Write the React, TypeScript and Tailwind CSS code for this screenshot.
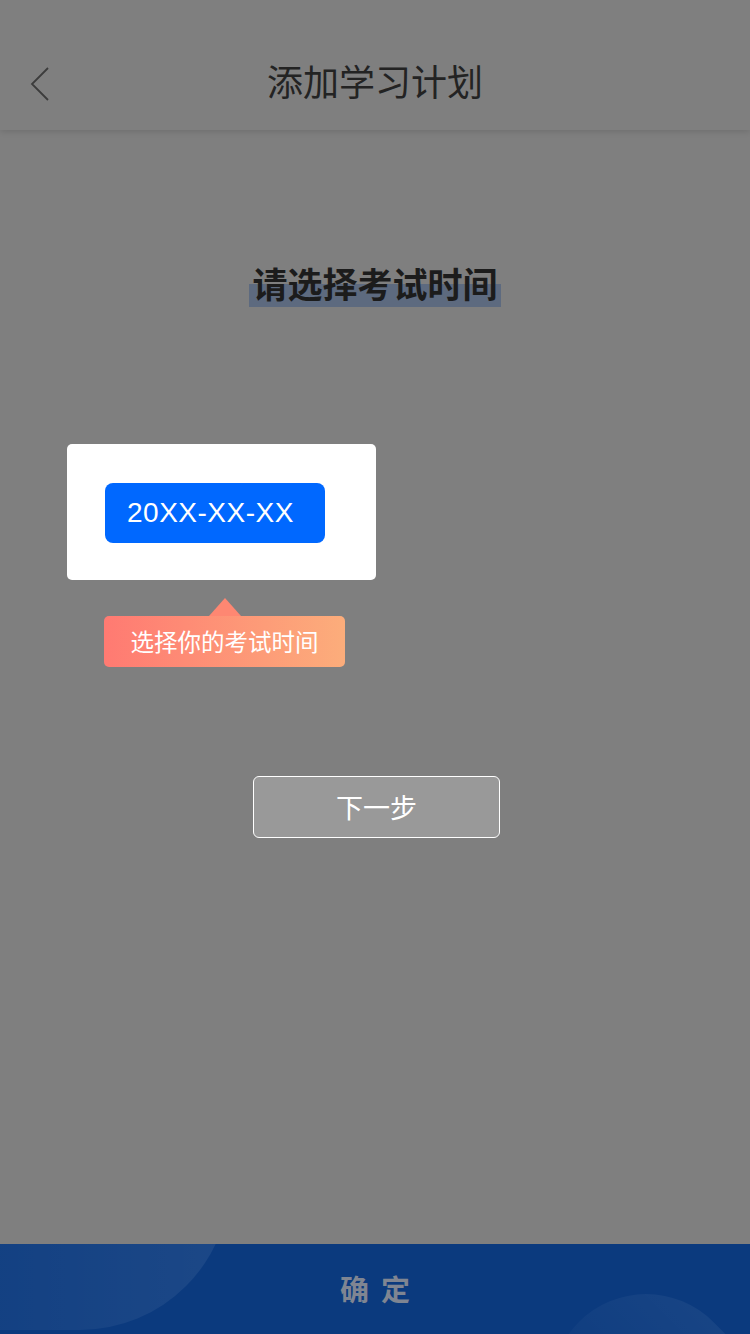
const cjk = "font-['PingFang_SC','Noto_Sans_CJK_SC',sans-serif]";

export default function App() {
  return (
    <main className={`flex h-[1334px] w-[750px] flex-col bg-[#7f7f7f] ${cjk}`}>
      {/* header */}
      <header className="relative flex h-[130px] shrink-0 items-center justify-center pt-[30px] shadow-[0_2px_6px_rgba(0,0,0,0.12)]">
        <svg
          className="absolute left-[29px] top-[66px]"
          width="22"
          height="36"
          viewBox="0 0 22 36"
          fill="none"
          stroke="#3c3c3c"
          strokeWidth="1.8"
        >
          <polyline points="19,2 3,18 19,34" />
        </svg>
        <h1 className="text-[36px] font-normal leading-none text-[#232323]">添加学习计划</h1>
      </header>

      <section className="flex flex-1 flex-col">
        <div className="mt-[131px] flex justify-center">
          <h2 className="inline-block bg-[linear-gradient(to_bottom,transparent_0,transparent_23px,#5d6a7f_23px,#5d6a7f_46px)] px-[3px] pb-[3px] text-[35px] font-bold leading-[43px] text-[#1c1c1c]">
            请选择考试时间
          </h2>
        </div>

        {/* highlighted date card */}
        <div className="ml-[67px] mt-[137px] w-[309px] rounded-[5px] bg-white px-[38px] pb-[37px] pt-[39px]">
          <button className="flex h-[60px] w-[220px] items-center rounded-[8px] bg-[#0068ff] pl-[22px] font-['Liberation_Sans',sans-serif] text-[28px] tracking-[0.5px] text-white">
            20XX-XX-XX
          </button>
        </div>

        {/* tip */}
        <div className="ml-[104px] mt-[18px] flex w-[241px] flex-col items-center">
          <div className="h-0 w-0 border-x-[16px] border-b-[18px] border-x-transparent border-b-[#fe8772]" />
          <div className="flex h-[51px] w-full items-center justify-center rounded-[5px] bg-[linear-gradient(to_right,#ff7a72,#fcad7b)] text-[23.5px] text-white">
            选择你的考试时间
          </div>
        </div>

        <div className="mt-[109px] flex justify-center pl-[3px]">
          <button className="h-[62px] w-[247px] rounded-[6px] border border-white bg-[#999999] text-[27px] text-white">
            下一步
          </button>
        </div>
      </section>

      {/* bottom bar */}
      <footer className="relative flex h-[90px] shrink-0 items-center justify-center overflow-hidden bg-[#0b3a7e]">
        <div className="absolute left-[-230px] top-[-214px] h-[300px] w-[460px] rounded-full bg-[linear-gradient(to_right,rgba(255,255,255,0),rgba(255,255,255,0.07))]" />
        <div className="absolute left-[590px] top-[34px] h-[300px] w-[190px] -rotate-[45deg] rounded-full bg-[linear-gradient(to_right,rgba(255,255,255,0),rgba(255,255,255,0.05))]" />
        <span className="relative pl-[12px] text-[29px] font-bold tracking-[12px] text-[#7f8592]">确定</span>
      </footer>
    </main>
  );
}
